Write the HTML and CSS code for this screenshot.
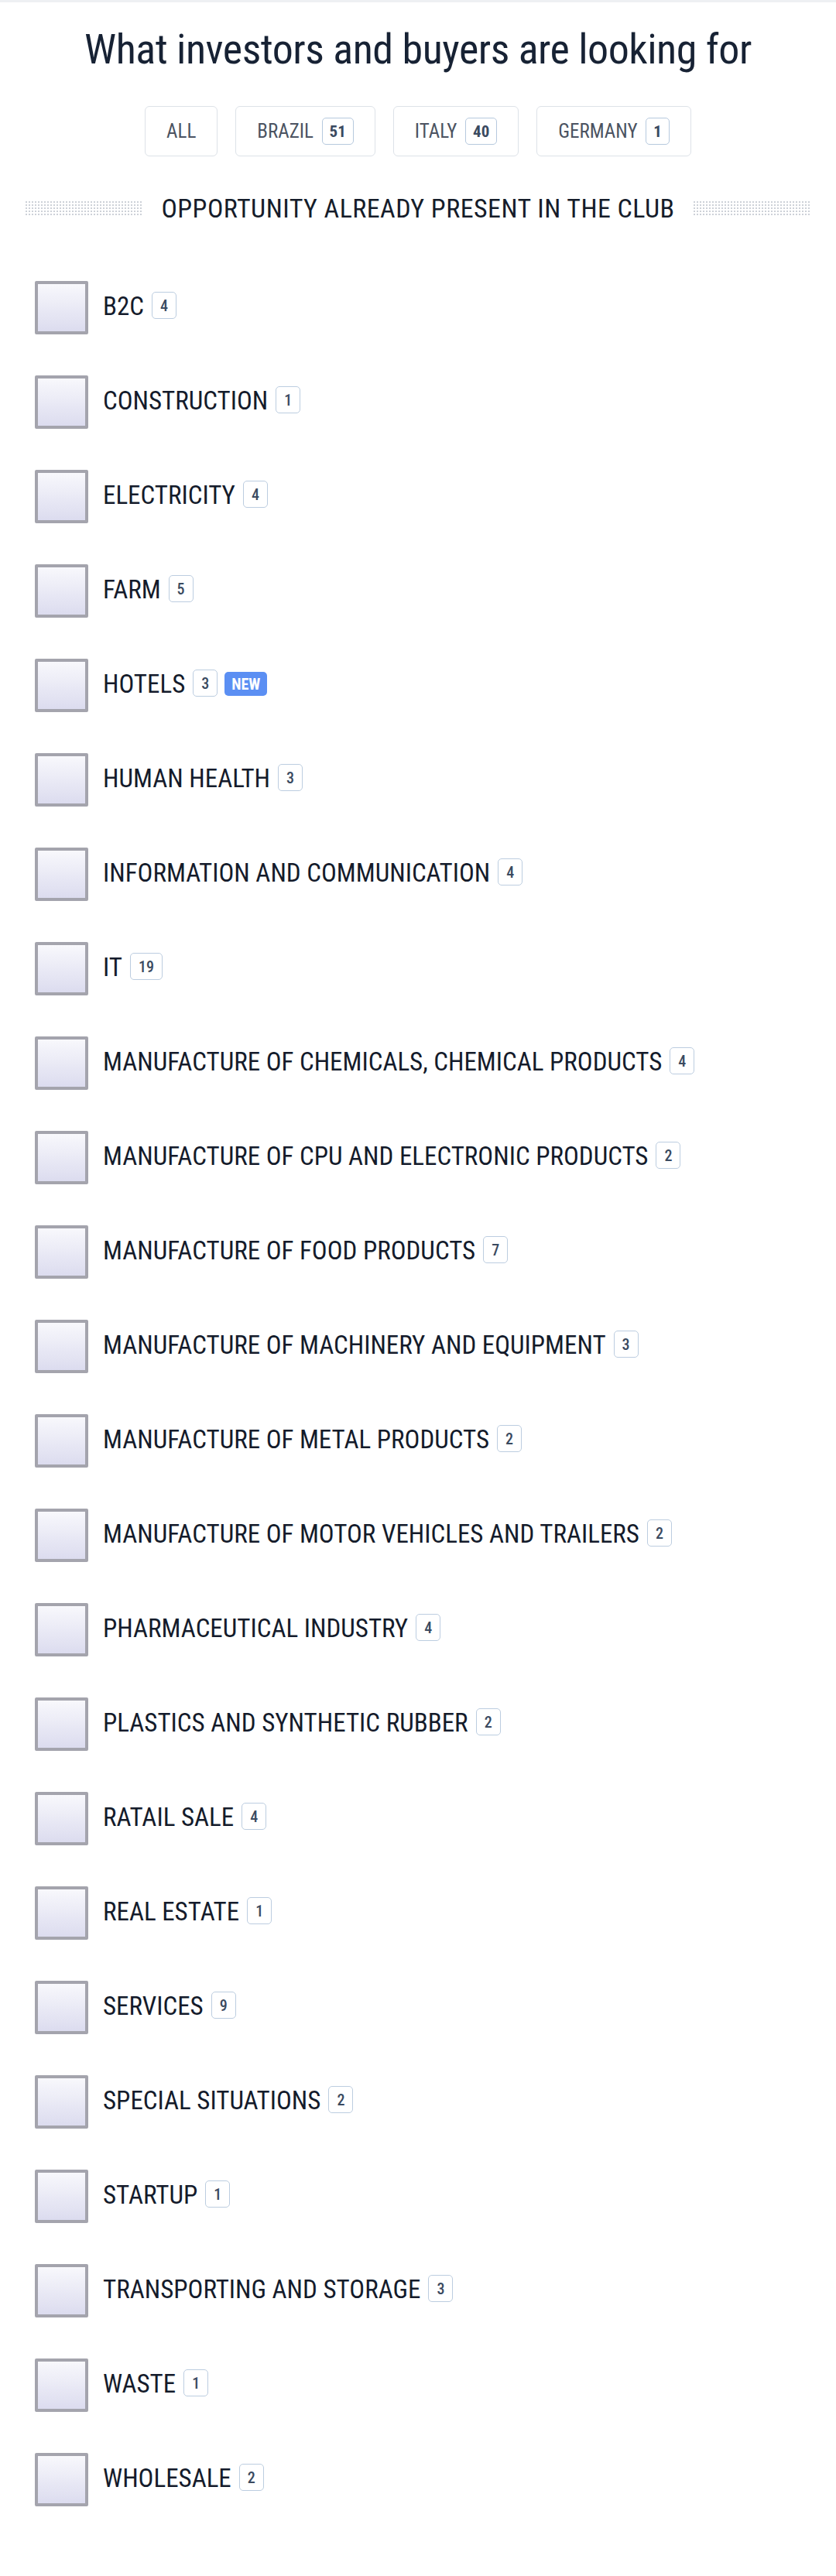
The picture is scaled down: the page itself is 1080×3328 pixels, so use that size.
FILE: index.html
```html
<!DOCTYPE html>
<html lang="en">
<head>
<meta charset="utf-8">
<title>What investors and buyers are looking for</title>
<link rel="stylesheet" href="styles.css">
</head>
<body>
<main class="page">
  <h1 class="title">What investors and buyers are looking for</h1>
  <nav class="filters">
    <button class="filter">ALL</button>
    <button class="filter">BRAZIL <span class="fcount">51</span></button>
    <button class="filter">ITALY <span class="fcount">40</span></button>
    <button class="filter">GERMANY <span class="fcount">1</span></button>
  </nav>
  <div class="divider">
    <span class="dots"></span>
    <h2 class="divider-text">OPPORTUNITY ALREADY PRESENT IN THE CLUB</h2>
    <span class="dots"></span>
  </div>
  <ul class="options">
    <li class="opt"><span class="cb"></span><span class="lbl">B2C</span><span class="cnt">4</span></li>
    <li class="opt"><span class="cb"></span><span class="lbl">CONSTRUCTION</span><span class="cnt">1</span></li>
    <li class="opt"><span class="cb"></span><span class="lbl">ELECTRICITY</span><span class="cnt">4</span></li>
    <li class="opt"><span class="cb"></span><span class="lbl">FARM</span><span class="cnt">5</span></li>
    <li class="opt"><span class="cb"></span><span class="lbl">HOTELS</span><span class="cnt">3</span><span class="new">NEW</span></li>
    <li class="opt"><span class="cb"></span><span class="lbl">HUMAN HEALTH</span><span class="cnt">3</span></li>
    <li class="opt"><span class="cb"></span><span class="lbl">INFORMATION AND COMMUNICATION</span><span class="cnt">4</span></li>
    <li class="opt"><span class="cb"></span><span class="lbl">IT</span><span class="cnt">19</span></li>
    <li class="opt"><span class="cb"></span><span class="lbl">MANUFACTURE OF CHEMICALS, CHEMICAL PRODUCTS</span><span class="cnt">4</span></li>
    <li class="opt"><span class="cb"></span><span class="lbl">MANUFACTURE OF CPU AND ELECTRONIC PRODUCTS</span><span class="cnt">2</span></li>
    <li class="opt"><span class="cb"></span><span class="lbl">MANUFACTURE OF FOOD PRODUCTS</span><span class="cnt">7</span></li>
    <li class="opt"><span class="cb"></span><span class="lbl">MANUFACTURE OF MACHINERY AND EQUIPMENT</span><span class="cnt">3</span></li>
    <li class="opt"><span class="cb"></span><span class="lbl">MANUFACTURE OF METAL PRODUCTS</span><span class="cnt">2</span></li>
    <li class="opt"><span class="cb"></span><span class="lbl">MANUFACTURE OF MOTOR VEHICLES AND TRAILERS</span><span class="cnt">2</span></li>
    <li class="opt"><span class="cb"></span><span class="lbl">PHARMACEUTICAL INDUSTRY</span><span class="cnt">4</span></li>
    <li class="opt"><span class="cb"></span><span class="lbl">PLASTICS AND SYNTHETIC RUBBER</span><span class="cnt">2</span></li>
    <li class="opt"><span class="cb"></span><span class="lbl">RATAIL SALE</span><span class="cnt">4</span></li>
    <li class="opt"><span class="cb"></span><span class="lbl">REAL ESTATE</span><span class="cnt">1</span></li>
    <li class="opt"><span class="cb"></span><span class="lbl">SERVICES</span><span class="cnt">9</span></li>
    <li class="opt"><span class="cb"></span><span class="lbl">SPECIAL SITUATIONS</span><span class="cnt">2</span></li>
    <li class="opt"><span class="cb"></span><span class="lbl">STARTUP</span><span class="cnt">1</span></li>
    <li class="opt"><span class="cb"></span><span class="lbl">TRANSPORTING AND STORAGE</span><span class="cnt">3</span></li>
    <li class="opt"><span class="cb"></span><span class="lbl">WASTE</span><span class="cnt">1</span></li>
    <li class="opt"><span class="cb"></span><span class="lbl">WHOLESALE</span><span class="cnt">2</span></li>
  </ul>
</main>
</body>
</html>
```

FILE: styles.css
```css
* { box-sizing: border-box; }

html, body {
  margin: 0;
  padding: 0;
  background: #ffffff;
}

body {
  border-top: 3px solid #eef0f3;
  font-family: "Roboto Condensed", Roboto, "Liberation Sans", sans-serif;
  color: #141b2b;
}

.page {
  width: 1080px;
}

.title {
  margin: 29px 0 0;
  font-size: 54px;
  line-height: 64px;
  font-weight: 400;
  letter-spacing: -0.5px;
  text-align: center;
  color: #172234;
}

.filters {
  display: flex;
  justify-content: center;
  gap: 23px;
  margin-top: 41px;
}

.filter {
  display: flex;
  align-items: center;
  height: 65px;
  padding: 0 27px;
  border: 1.5px solid #dde2e8;
  border-radius: 6px;
  background: #ffffff;
  font-family: inherit;
  font-size: 25px;
  letter-spacing: 0;
  color: #4b5361;
  white-space: pre;
}

.fcount {
  display: inline-flex;
  align-items: center;
  justify-content: center;
  height: 35px;
  padding: 0 9px;
  margin-left: 5px;
  border: 1.5px solid #b6c9de;
  border-radius: 5px;
  font-size: 21px;
  font-weight: 700;
  letter-spacing: 0;
  color: #3a4a60;
}

.divider {
  display: flex;
  align-items: center;
  gap: 23px;
  margin-top: 47px;
  padding: 0 32px;
  height: 40px;
}

.dots {
  flex: 1;
  height: 21px;
  background-image: radial-gradient(circle, #cdd1d8 0.9px, transparent 1.3px);
  background-size: 4px 4px;
}

.divider-text {
  margin: 0;
  font-size: 34px;
  line-height: 40px;
  font-weight: 400;
  letter-spacing: 0.45px;
  color: #151c2a;
  white-space: nowrap;
}

.options {
  list-style: none;
  margin: 74px 0 0;
  padding: 0 0 0 45px;
}

.opt {
  display: flex;
  align-items: center;
  height: 69px;
  margin-bottom: 53px;
}

.cb {
  flex: none;
  width: 69px;
  height: 69px;
  border: 4px solid #a4a4ad;
  border-radius: 2px;
  background: linear-gradient(#f8f8fc, #dcdcef);
  margin-right: 19px;
}

.lbl {
  font-size: 33px;
  letter-spacing: 0;
  color: #141b2b;
  margin-top: -4px;
}

.cnt {
  display: inline-flex;
  align-items: center;
  justify-content: center;
  height: 35px;
  padding: 0 10px;
  margin-left: 10px;
  margin-top: -6px;
  border: 1.5px solid #bccde0;
  border-radius: 5px;
  font-size: 20px;
  font-weight: 500;
  color: #3a4a60;
}

.new {
  display: inline-flex;
  align-items: center;
  justify-content: center;
  height: 31px;
  padding: 0 9px;
  margin-left: 9px;
  margin-top: -4px;
  border-radius: 5px;
  background: #5b8ff3;
  color: #ffffff;
  font-size: 20px;
  font-weight: 700;
  letter-spacing: 0;
}
```
